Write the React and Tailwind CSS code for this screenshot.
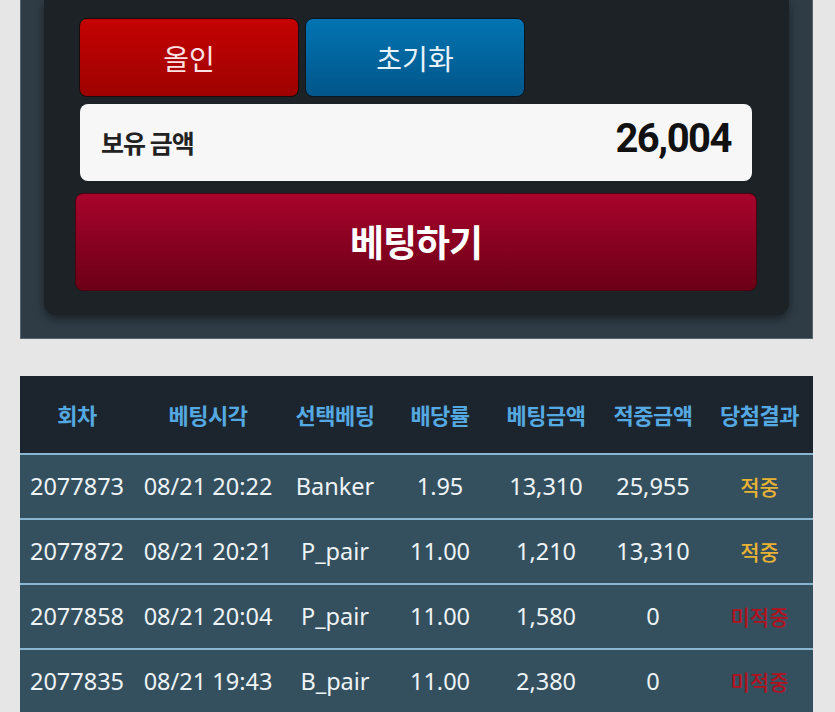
import React from 'react';

const rows = [
  { round: '2077873', time: '08/21 20:22', pick: 'Banker', odds: '1.95', bet: '13,310', win: '25,955', hit: true },
  { round: '2077872', time: '08/21 20:21', pick: 'P_pair', odds: '11.00', bet: '1,210', win: '13,310', hit: true },
  { round: '2077858', time: '08/21 20:04', pick: 'P_pair', odds: '11.00', bet: '1,580', win: '0', hit: false },
  { round: '2077835', time: '08/21 19:43', pick: 'B_pair', odds: '11.00', bet: '2,380', win: '0', hit: false },
];

const headers = ['회차', '베팅시각', '선택베팅', '배당률', '베팅금액', '적중금액', '당첨결과'];

const cols = 'grid grid-cols-[114px_148px_106px_104px_108px_106px_107px]';

export default function App() {
  return (
    <div
      className="min-h-screen bg-[#e6e6e6] pl-[20px] pr-[22px] pb-10"
      style={{ fontFamily: '"Noto Sans", "Noto Sans CJK KR", sans-serif' }}
    >
      {/* Bet panel */}
      <div className="bg-[#2f3c46] border-x border-b border-[#56666f] px-[23px] pb-[23px]">
        <div className="bg-[#1c2226] rounded-b-xl shadow-[0_4px_10px_rgba(0,0,0,0.45)] pt-[18px] pb-[24px] pl-[35px] pr-[37px] flex flex-col">
          <div className="flex gap-[6px]">
            <button className="w-[220px] h-[79px] rounded-lg border border-[#1a0a0a] bg-gradient-to-b from-[#c40202] to-[#9e0202] text-[#fbe3e3] text-[28px]"
              style={{ fontFamily: '"Noto Sans CJK KR", sans-serif' }}>
              올인
            </button>
            <button className="w-[220px] h-[79px] rounded-lg border border-[#0a1522] bg-gradient-to-b from-[#0274b2] to-[#02568a] text-[#e8f3fb] text-[28px]"
              style={{ fontFamily: '"Noto Sans CJK KR", sans-serif' }}>
              초기화
            </button>
          </div>

          <div className="mt-[7px] ml-px h-[77px] rounded-lg bg-[#f7f7f8] flex items-center justify-between pl-[21px] pr-[21px]">
            <span className="text-[25px] font-bold text-[#222] tracking-[-1px]"
              style={{ fontFamily: '"Noto Sans CJK KR", sans-serif' }}>
              보유 금액
            </span>
            <span className="mb-[8px] text-[40px] font-bold text-[#111] leading-none tracking-[-1.5px]"
              style={{ fontFamily: 'Roboto, sans-serif' }}>
              26,004
            </span>
          </div>

          <button className="mt-[12px] -ml-[4px] -mr-[5px] h-[98px] rounded-lg border border-[#4a0010] bg-gradient-to-b from-[#a8042b] to-[#6b0017] text-white text-[37px] font-bold tracking-[-1px]"
            style={{ fontFamily: '"Noto Sans CJK KR", sans-serif' }}>
            베팅하기
          </button>
        </div>
      </div>

      {/* History table */}
      <div className="mt-[37px] bg-[#34505f]">
        <div className={`${cols} h-[79px] bg-[#1c252d] items-center border-b-2 border-[#8bb6d2]`}>
          {headers.map(h => (
            <div key={h} className="text-center text-[22px] font-bold text-[#55a9e2] tracking-[-0.5px]"
              style={{ fontFamily: '"Noto Sans CJK KR", sans-serif' }}>
              {h}
            </div>
          ))}
        </div>
        {rows.map(r => (
          <div key={r.round} className={`${cols} h-[65px] items-center border-b-2 border-[#8bb6d2] text-[23.5px] text-[#eef3f6]`}>
            <div className="text-center">{r.round}</div>
            <div className="text-center">{r.time}</div>
            <div className="text-center">{r.pick}</div>
            <div className="text-center">{r.odds}</div>
            <div className="text-center">{r.bet}</div>
            <div className="text-center">{r.win}</div>
            <div className={`text-center text-[21px] font-medium ${r.hit ? 'text-[#e8b232]' : 'text-[#b3101e]'}`}
              style={{ fontFamily: '"Noto Sans CJK KR", sans-serif' }}>
              {r.hit ? '적중' : '미적중'}
            </div>
          </div>
        ))}
      </div>
    </div>
  );
}
